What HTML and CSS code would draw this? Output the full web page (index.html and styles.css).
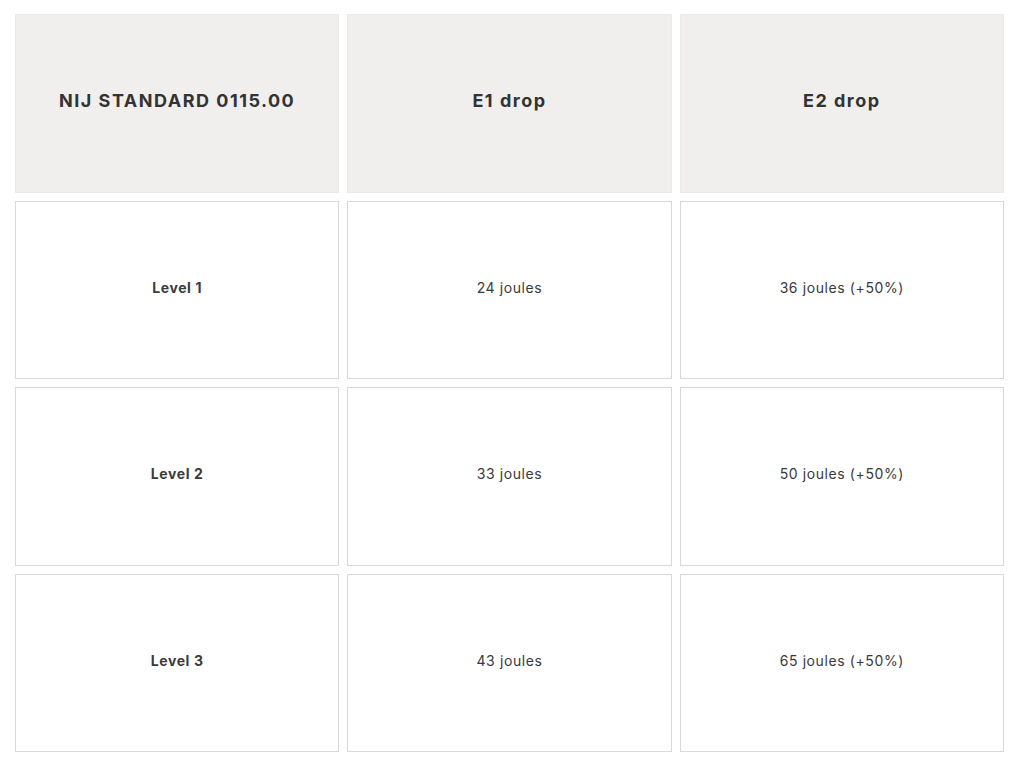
FILE: index.html
```html
<!DOCTYPE html>
<html>
<head>
<meta charset="utf-8">
<link rel="stylesheet" href="styles.css">
</head>
<body>
<div class="table">
  <div class="cell head">NIJ STANDARD 0115.00</div>
  <div class="cell head">E1 drop</div>
  <div class="cell head">E2 drop</div>

  <div class="cell label">Level 1</div>
  <div class="cell">24 joules</div>
  <div class="cell">36 joules (+50%)</div>

  <div class="cell label">Level 2</div>
  <div class="cell">33 joules</div>
  <div class="cell">50 joules (+50%)</div>

  <div class="cell label">Level 3</div>
  <div class="cell">43 joules</div>
  <div class="cell">65 joules (+50%)</div>
</div>
</body>
</html>
```
FILE: styles.css
```css
html, body {
  margin: 0;
  padding: 0;
  background: #ffffff;
}
body {
  font-family: Inter, "Liberation Sans", sans-serif;
  color: #333333;
}
.table {
  display: grid;
  grid-template-columns: repeat(3, 1fr);
  grid-template-rows: repeat(4, 1fr);
  gap: 8px;
  width: 989px;
  height: 738px;
  padding: 14px 0 0 15px;
  box-sizing: content-box;
}
.cell {
  display: flex;
  align-items: center;
  justify-content: center;
  border: 1px solid #d8d8d8;
  background: #ffffff;
  font-size: 14px;
  letter-spacing: 0.6px;
  color: #3a3a3a;
  padding-bottom: 5px;
}
.cell.head {
  background: #f0efed;
  border-color: #ebeae8;
  font-size: 18px;
  font-weight: 700;
  letter-spacing: 1.5px;
  color: #333333;
  padding-bottom: 6px;
}
.cell.label {
  font-weight: 700;
}
```
